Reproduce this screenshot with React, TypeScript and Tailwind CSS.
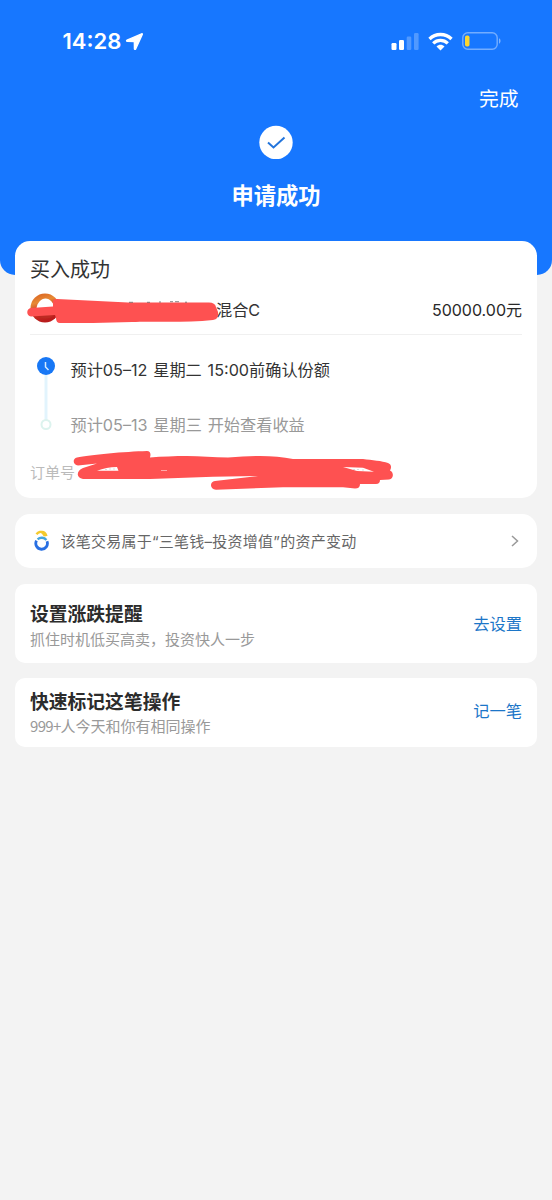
import type { ReactNode } from "react";

function StatusBar() {
  return (
    <div className="flex h-[82px] items-center justify-between pr-[51px] pl-[62.5px]">
      <div className="flex items-center gap-1 text-white">
        <span className="text-[22px] leading-7 font-semibold">14:28</span>
        <svg width="19" height="19" viewBox="0 0 19 19" fill="currentColor">
          <path
            d="M16.6 1.8 2 8.2c-.8.4-.6 1.200.3 1.200l7 .1.1 7.200c0 .9.900 1 1.300.2L17.300 2.500c.3-.6-.1-.9-.7-.7z"
            stroke="currentColor"
            strokeWidth="1.3"
            strokeLinejoin="round"
          />
        </svg>
      </div>
      <div className="flex items-center">
        <svg width="28" height="18" viewBox="0 0 28 18" fill="#fff">
          <rect x="0.5" y="11" width="5" height="7" rx="1.2" />
          <rect x="8" y="8" width="5" height="10" rx="1.2" />
          <rect x="15.7" y="4.5" width="4.6" height="13.5" rx="1.2" opacity=".25" />
          <rect x="23" y="1" width="4.6" height="17" rx="1.2" opacity=".25" />
        </svg>
        <svg className="ml-[9px]" width="25" height="19" viewBox="0 0 25 19" fill="none" stroke="#fff">
          <path d="M1.500 7C7.600 1 17.400 1 23.500 7" strokeWidth="3.3" />
          <path d="M5.200 11.300c4.100-4 10.500-4 14.600 0" strokeWidth="3.2" />
          <path d="M8.500 14.500c2.300-2.200 5.700-2.200 8 0L12.500 18.500z" fill="#fff" stroke="none" />
        </svg>
        <svg className="ml-[9px]" width="39" height="18" viewBox="0 0 39 18">
          <rect x=".8" y=".8" width="34.4" height="16.4" rx="5" fill="none" stroke="#fff" strokeOpacity=".4" strokeWidth="1.4" />
          <rect x="3" y="3.5" width="4.5" height="11" rx="1.8" fill="#fbd52f" />
          <path d="M37 6.300c2 .8 2 4.600 0 5.400z" fill="#fff" opacity=".45" />
        </svg>
      </div>
    </div>
  );
}

function FundLogo() {
  return (
    <svg className="-mt-[4px] shrink-0" width="30" height="30" viewBox="0 0 30 30">
      <defs>
        <linearGradient id="ring" x1="0" y1="0" x2="0.3" y2="1">
          <stop offset="0" stopColor="#d85b1c" />
          <stop offset=".35" stopColor="#e78a35" />
          <stop offset=".65" stopColor="#c93221" />
          <stop offset="1" stopColor="#b91c1c" />
        </linearGradient>
      </defs>
      <circle cx="15" cy="15" r="14.5" fill="url(#ring)" />
      <path d="M6.500 15.500C7 10 11 5.500 15.500 5.500S24 10 24.500 15.500C24 21 20 25 15.500 25S7 21 6.500 15.500z" fill="#fff" />
      <path d="M7.500 22.500l8-3 8 3c-3 4-13 4-16 0z" fill="#bd2a22" />
    </svg>
  );
}

function ThreeMoneyLogo() {
  return (
    <svg className="shrink-0" width="16" height="22" viewBox="0 0 16 22" fill="none">
      <path d="M2.500 4.300C4.500 1.500 7 1.300 8.900 3L11 6M6.500 2.200c2.600-.7 5 1 6 4" stroke="#f4ca2d" strokeWidth="2.4" />
      <path d="M2.500 10.700A5.800 5.800 0 1 0 13 11.300" stroke="#286fe2" strokeWidth="2.8" />
      <path d="M3.600 9.300c2.500-2.200 6.700-2 8.800.6" stroke="#43a5df" strokeWidth="2.4" />
    </svg>
  );
}

/** Trazos rojos que cubren el nombre del fondo */
function NameMark() {
  return (
    <svg className="pointer-events-none absolute top-[50px] left-[10px]" width="195" height="36" viewBox="25 291 195 36">
      <path
        d="M31 308 53 306.500V301q0-2 4-2L128 302.500H209Q215 302.500 216 307L218 312Q219 319 213 320C185 323 151 321 132 322L93 323H60Q56 323 56 318L55 315 31 316.500C26 316 26 308.500 31 308Z"
        fill="#fe5151"
      />
      <path d="M129 302.300h4M147 302.300h3M159 302h2M170 301.700h3m2 0h4M185 302.200h2" stroke="#555" strokeWidth=".7" />
    </svg>
  );
}

/** Trazos rojos sobre el número de orden */
function OrderMark() {
  return (
    <svg className="pointer-events-none absolute top-[208px] left-[55px]" width="330" height="44" viewBox="70 449 330 44">
      <path
        d="M77 457.500C90 455 125 451.500 147 451Q150.500 451 150.500 455L150 457.500C162 456.500 175 456 187 456C200 456 214 457.500 228 457.500C240 456.500 250 456 260 456C272 456 283 457 293 459H363C372 460 382 461 388 463C391 464 392 467 390 470.500C394 472 394 479 389 479.500L380 480Q380 484 376 484H360Q360 488.500 355 488.500L343 487.300H283L216 489.700C210 489.500 209 482 215 481L258 476L213 476.700L150 479H83C76 478 76 471 83 468L97 463.500L78 465.500C73 465 72 458.500 77 457.500Z"
        fill="#fe5151"
      />
      <path d="M97 470.700C103 468.500 110 467 117 467L118.500 470.700ZM343 467L363 467.700L374 471.700L357 471ZM161 470.200h6v.5h-6z" fill="#fff" />
      <path d="M105 469.500h2m2-.5h2m2 0h2M353 469.500h2m2 0h2m3 .5h2" stroke="#ddd" />
    </svg>
  );
}

interface ActionCardProps {
  title: string;
  children: ReactNode;
  action: string;
  className: string;
}

function ActionCard({ title, children, action, className }: ActionCardProps) {
  return (
    <section className={`flex justify-between rounded-[10px] bg-white px-[15px] ${className}`}>
      <div>
        <h2 className="text-[18.8px] leading-[26px] font-bold text-[#2c2c2c]">{title}</h2>
        <p className="h-[23px] text-[15px] leading-[23px] text-[#999]">{children}</p>
      </div>
      <button type="button" className="mt-[9px] h-6 text-[16.3px] leading-6 text-[#1c76c8]">
        {action}
      </button>
    </section>
  );
}

export default function App() {
  return (
    <div className="min-h-[1200px] w-[552px] bg-[#f3f3f3] font-[Inter,'Noto_Sans_CJK_SC',sans-serif] text-[#333]">
      <header className="h-[275px] rounded-b-[15px] bg-[#1777ff] text-white">
        <StatusBar />
        <div className="flex h-[34px] items-center justify-end pt-[2px] pr-[33.5px] text-[19.8px]">完成</div>
        <div className="flex flex-col items-center pt-[9px]">
          <svg width="34" height="34" viewBox="0 0 34 34" fill="none">
            <circle cx="17" cy="17.5" r="16.7" fill="#fff" />
            <path d="m9 17.500 5.500 5L25.500 12.500" stroke="#2375dc" strokeWidth="2" />
          </svg>
          <h1 className="mt-[21px] text-[22.3px] leading-8 font-bold">申请成功</h1>
        </div>
      </header>

      <main className="relative -mt-[34px] flex flex-col px-[15px]">
        <section className="relative h-[257px] rounded-[15px] bg-white px-[15px] pt-[13px]">
          <h2 className="text-[20px] leading-8 text-[#333]">买入成功</h2>
          <div className="mt-[5px] flex h-[38px] items-center">
            <FundLogo />
            <span className="ml-[156px] text-[16.2px]">混合C</span>
            <span className="ml-auto text-[16px] whitespace-nowrap text-[#292929]">50000.00元</span>
          </div>
          <div className="mt-[5px] h-px bg-[#f0f0f0]" />

          <div className="mt-[20px] flex h-[82px]">
            <div className="flex w-[31px] flex-col items-center">
              <svg width="18" height="80" viewBox="0 0 18 80" fill="none">
                <path d="M9 17v48" stroke="#e2f4fd" strokeWidth="3" />
                <circle cx="9" cy="11" r="9" fill="#1777f5" />
                <path d="M8.500 7v5l3 3" stroke="#d4ebff" strokeWidth="1.5" />
                <circle cx="9" cy="69.5" r="4.5" stroke="#dcf3ee" strokeWidth="2" />
              </svg>
            </div>
            <div className="ml-[9.5px] flex flex-col gap-[31px] pt-[3px] text-[16.2px] leading-6 [word-spacing:1.2px]">
              <p>预计05–12 星期二 15:00前确认份额</p>
              <p className="text-[#999]">预计05–13 星期三 开始查看收益</p>
            </div>
          </div>
          <div className="mt-[24px] text-[15px] leading-6 text-[#bbb]">订单号</div>
          <NameMark />
          <OrderMark />
        </section>

        <section className="mt-4 flex h-[54px] items-center rounded-[15px] bg-white pr-[18px] pl-[19px]">
          <ThreeMoneyLogo />
          <span className="ml-[10.5px] pt-[2px] text-[15px] tracking-[0.25px] text-[#666]">
            该笔交易属于“三笔钱–投资增值”的资产变动
          </span>
          <svg className="ml-auto" width="8" height="12" viewBox="0 0 8 12" fill="none">
            <path d="m1 1 5.500 5L1 11" stroke="#999" strokeWidth="1.5" />
          </svg>
        </section>

        <ActionCard title="设置涨跌提醒" action="去设置" className="mt-4 h-[79px] pt-[18px] [&>button]:mt-[10px]">
          抓住时机低买高卖，投资快人一步
        </ActionCard>
        <ActionCard title="快速标记这笔操作" action="记一笔" className="mt-[15px] h-[69px] pt-3 [&_p]:-mt-[2px]">
          <span className="font-['Noto_Sans_CJK_SC',sans-serif] tracking-[-0.7px]">999+</span>人今天和你有相同操作
        </ActionCard>
      </main>
    </div>
  );
}
